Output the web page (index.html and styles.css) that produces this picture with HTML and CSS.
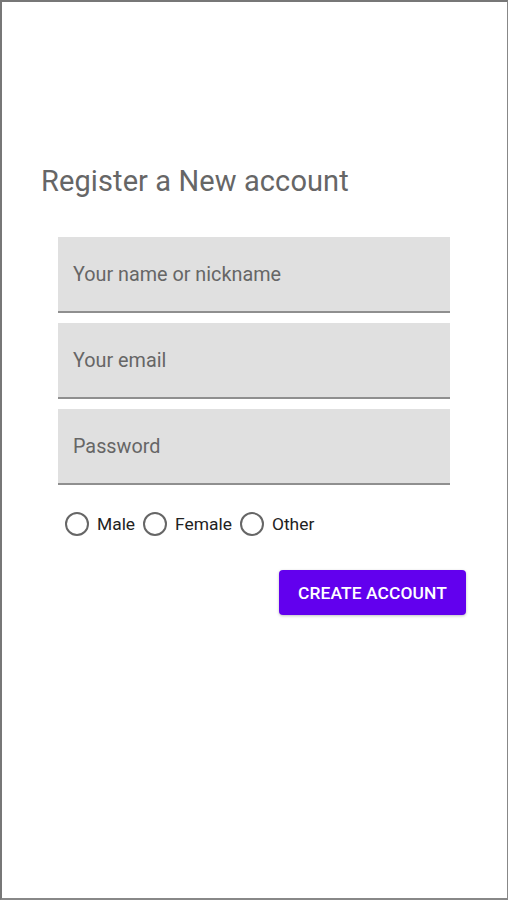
FILE: index.html
```html
<!DOCTYPE html>
<html>
<head>
<meta charset="utf-8">
<link rel="stylesheet" href="styles.css">
</head>
<body>
<div class="screen">
  <h1 class="title">Register a New account</h1>
  <div class="fields">
    <div class="field"><span class="placeholder">Your name or nickname</span></div>
    <div class="field"><span class="placeholder">Your email</span></div>
    <div class="field"><span class="placeholder">Password</span></div>
  </div>
  <div class="radios">
    <label class="radio"><span class="circle"></span><span class="rlabel">Male</span></label>
    <label class="radio"><span class="circle"></span><span class="rlabel">Female</span></label>
    <label class="radio"><span class="circle"></span><span class="rlabel">Other</span></label>
  </div>
  <div class="actions">
    <button class="btn">CREATE ACCOUNT</button>
  </div>
</div>
</body>
</html>
```
FILE: styles.css
```css
html, body {
  margin: 0;
  padding: 0;
  background: #ffffff;
}
body {
  font-family: Roboto, "Noto Sans", sans-serif;
}
.screen {
  box-sizing: border-box;
  width: 508px;
  height: 900px;
  border-top: 2px solid #777;
  border-left: 2px solid #777;
  border-right: 1px solid #888;
  border-bottom: 2px solid #888;
  padding-top: 161px;
}
.title {
  margin: 0 0 0 39px;
  font-size: 29px;
  font-weight: 400;
  color: #666;
  line-height: 36px;
  letter-spacing: 0.1px;
}
.fields {
  margin: 38px 0 0 56px;
  width: 392px;
  display: flex;
  flex-direction: column;
  gap: 10px;
}
.field {
  box-sizing: border-box;
  height: 76px;
  background: #e0e0e0;
  border-bottom: 2px solid #8f8f8f;
  display: flex;
  align-items: center;
  padding-left: 15px;
  padding-top: 1px;
}
.placeholder {
  font-size: 19.8px;
  color: #666;
}
.radios {
  display: flex;
  margin: 27px 0 0 63px;
  gap: 8px;
  align-items: center;
}
.radio {
  display: flex;
  align-items: center;
}
.circle {
  box-sizing: border-box;
  width: 24px;
  height: 24px;
  border: 2px solid #666;
  border-radius: 50%;
  margin-right: 8px;
}
.rlabel {
  font-size: 17.4px;
  color: #222;
}
.actions {
  display: flex;
  justify-content: flex-end;
  margin: 34px 41px 0 0;
}
.btn {
  width: 187px;
  height: 45px;
  border: none;
  border-radius: 4px;
  background: #6200ee;
  color: #fff;
  font-family: Roboto, sans-serif;
  font-size: 17.4px;
  font-weight: 500;
  letter-spacing: 0.1px;
  box-shadow: 0 1px 3px rgba(0,0,0,0.25);
  padding: 0;
}
```
